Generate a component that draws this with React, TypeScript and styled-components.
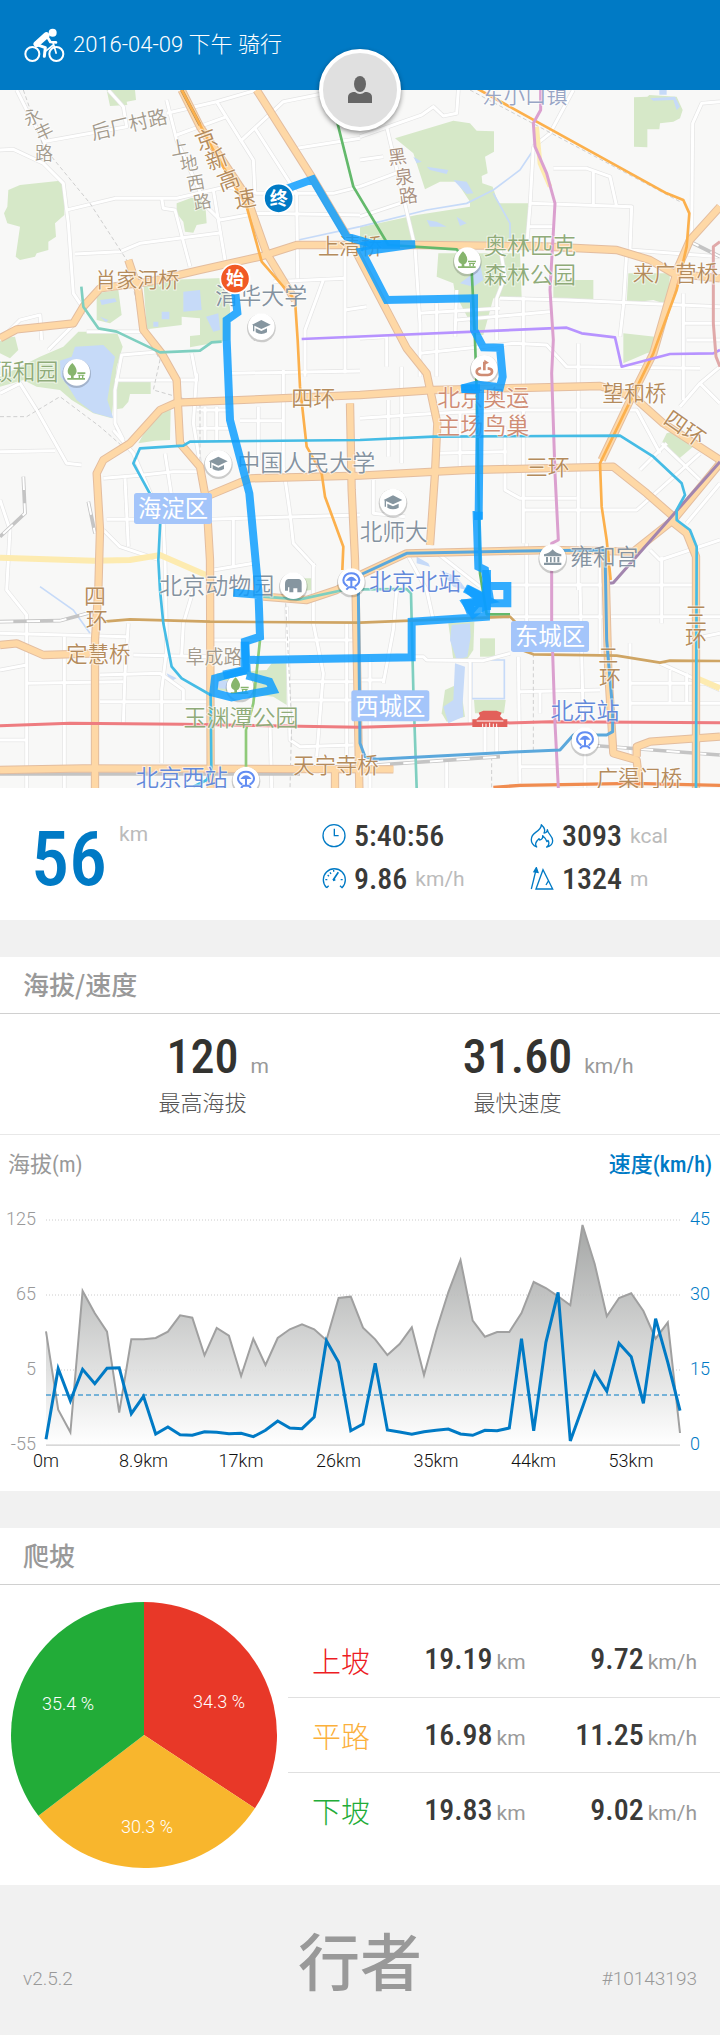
import React from 'react';
import styled, { createGlobalStyle } from 'styled-components';

const blue = '#007ac5';
const sans = 'Roboto, "Noto Sans CJK SC", sans-serif';
const cjk = '"Noto Sans CJK SC", sans-serif';
const condensed = '"Roboto Condensed", Roboto, "Noto Sans CJK SC", sans-serif';

const GlobalStyle = createGlobalStyle`
  * { box-sizing: border-box; }
  body { margin: 0; background: #f1f1f1; color: #333; font-family: ${sans}; }
  h1, h2, p { margin: 0; font-weight: 400; }
  svg { display: block; }
`;

const Page = styled.main`
  display: flex;
  flex-direction: column;
`;

const Header = styled.header`
  position: relative;
  display: flex;
  align-items: center;
  gap: 8px;
  height: 90px;
  padding: 0 24px;
  background: ${blue};
  color: #fff;
`;

const Title = styled.h1`
  font-size: 22px;
  line-height: 32px;
  font-family: Roboto, "Noto Sans CJK SC", sans-serif;
  font-weight: 300;
`;

const Avatar = styled.div`
  position: absolute;
  left: 50%;
  bottom: 0;
  transform: translate(-50%, 50%);
  z-index: 1;
  display: flex;
  align-items: center;
  justify-content: center;
  width: 82px;
  height: 82px;
  border: 4px solid #fff;
  border-radius: 50%;
  background: #e0e0e0;
  box-shadow: 0 2px 5px rgba(0, 0, 0, 0.45);
`;

const MapView = styled.svg`
  width: 100%;
  height: auto;
  background: #f8f8f7;
`;

const Summary = styled.section`
  display: grid;
  grid-template-columns: 322fr 208fr 190fr;
  align-items: center;
  padding: 26px 0 20px;
  background: #fff;
`;

const Distance = styled.p`
  display: flex;
  align-items: flex-start;
  gap: 12px;
  padding: 4px 0 0 31px;
  color: ${blue};
  font: 500 76px/82px ${condensed};
`;

const Unit = styled.span<{ $tone?: string }>`
  color: ${p => p.$tone || '#bbb'};
  font: 400 21px/32px ${sans};
`;

const StatColumn = styled.div`
  display: flex;
  flex-direction: column;
`;

const Stat = styled.p`
  display: flex;
  align-items: center;
  gap: 8px;
  height: 43px;
  white-space: nowrap;
`;

const Figure = styled.span`
  color: #3a3a38;
  font: 500 30px/36px ${condensed};
`;

const Card = styled.section`
  margin-top: 37px;
  background: #fff;
`;

const CardTitle = styled.h2`
  height: 57px;
  padding: 0 23px;
  border-bottom: 1px solid #d0d0d0;
  color: #999;
  font: 500 26px/54px ${cjk};
`;

const Peaks = styled.div`
  display: grid;
  grid-template-columns: 1fr 1fr;
  padding: 16px 45px;
  border-bottom: 1px solid #e8e8e8;
`;

const Peak = styled.div`
  display: flex;
  flex-direction: column;
`;

const PeakValue = styled.p`
  display: grid;
  grid-template-columns: 1fr auto 1fr;
  column-gap: 12px;
  align-items: baseline;
  color: #333330;
  font: 500 48px/54px ${condensed};

  &::before { content: ""; }
`;

const PeakLabel = styled.p`
  color: #555;
  text-align: center;
  font: 300 22px/34px ${cjk};
`;

const AxisTitles = styled.div`
  display: flex;
  justify-content: space-between;
  padding: 4px 8px 0;
  font: 22px/52px ${condensed};
`;

const AxisTitle = styled.span<{ $strong?: boolean }>`
  color: ${p => (p.$strong ? blue : '#999')};
  font-weight: ${p => (p.$strong ? 500 : 400)};
`;

const Chart = styled.svg`
  width: 100%;
  height: auto;
  font: 300 18px ${sans};
`;

const Climb = styled.div`
  display: grid;
  grid-template-columns: 2fr 3fr;
  align-items: center;
  padding: 17px 0;
`;

const Pie = styled.svg`
  width: 100%;
  height: auto;
  font: 300 18px ${sans};
`;

const ClimbTable = styled.table`
  width: 100%;
  border-collapse: collapse;
  table-layout: fixed;
  white-space: nowrap;
`;

const ClimbRow = styled.tr`
  height: 75px;
  & + & { border-top: 1px solid #e0e0e0; }
`;

const Kind = styled.th<{ $tone: string }>`
  width: 24%;
  padding: 0 0 0 24px;
  color: ${p => p.$tone};
  text-align: left;
  font: 300 29px/40px ${cjk};
`;

const Amount = styled.td<{ $last?: boolean }>`
  width: ${p => (p.$last ? '45%' : '31%')};
  padding: 0 ${p => (p.$last ? '23px' : '0')} 0 0;
  text-align: right;

  ${Unit} { margin-left: 4px; }
`;

const Footer = styled.footer`
  display: grid;
  grid-template-columns: 1fr auto 1fr;
  align-items: end;
  padding: 29px 23px 31px;
  color: #999;
  font: 300 19px/26px ${sans};
`;

const FooterNote = styled.span<{ $end?: boolean }>`
  padding-bottom: 12px;
  text-align: ${p => (p.$end ? 'right' : 'left')};
`;

const Brand = styled.strong`
  color: #999;
  font: 500 62px/90px ${cjk};
`;

/* ---------- icons ---------- */

const BikeIcon = () => (
  <svg width="41" height="36" viewBox="0 0 123 108" fill="none" stroke="#fff" aria-hidden="true">
    <circle cx="25" cy="81" r="21" strokeWidth="6" />
    <circle cx="97" cy="81" r="21" strokeWidth="6" />
    <circle cx="86" cy="17" r="12" fill="#fff" stroke="none" />
    <path d="M67 25 38 51" strokeWidth="19" strokeLinecap="round" />
    <path d="M36 52 64 62 61 88" strokeWidth="9" strokeLinejoin="round" strokeLinecap="round" />
    <path d="M68 26 79 45 96 46" strokeWidth="8" strokeLinejoin="round" strokeLinecap="round" />
    <path d="M86 43 97 80M64 73 88 54" strokeWidth="5" />
  </svg>
);

const UserIcon = () => (
  <svg width="24" height="28" viewBox="0 0 24 28" fill="#666" aria-hidden="true">
    <ellipse cx="12" cy="8" rx="6" ry="8" />
    <path d="M0 27V21q0-4 5-5h2q5 4 10 0h2q5 1 5 5v6z" />
  </svg>
);

const LineIcon = ({ children }: { children: React.ReactNode }) => (
  <svg width="24" height="24" viewBox="0 0 72 72" fill="none" stroke={blue} strokeWidth="4" aria-hidden="true">
    {children}
  </svg>
);

const ClockIcon = () => (
  <LineIcon><circle cx="36" cy="35" r="33" /><path d="M37 14V35H50" /></LineIcon>
);

const GaugeIcon = () => (
  <LineIcon>
    <path d="M14 62A33 33 0 1 1 60 62L54 56M14 62 20 56" />
    <path d="M33 40 49 16M33 40 40 38" strokeWidth="5" />
    <path d="M10 38h6M56 38h6M24 16l3 5M35 9v5M17 24l4 4" />
  </LineIcon>
);

const FireIcon = () => (
  <LineIcon>
    <path d="M20 69C-3 58 1 36 17 25C29 17 34 10 34 2C43 10 46 20 42 27C51 26 52 20 52 17C53 30 68 35 68 50Q68 65 50 69Q61 60 54 49L51 53Q47 42 38 35Q39 47 29 48L27 44Q11 58 20 69Z" strokeLinejoin="round" />
  </LineIcon>
);

const ClimbIcon = () => (
  <LineIcon>
    <path d="M4 66 17 13" /><path d="M12 14 19 2 24 16Z" fill={blue} />
    <path d="M18 66 39 8 68 66ZM48 54 55 42" />
  </LineIcon>
);

/* ---------- map ---------- */

const parks = [
  'M25 300 60 285 180 272 193 290 193 375 165 400 168 440 145 455 145 480 110 490 105 500 60 510 47 500 60 410 22 400 12 370 22 350Z',
  'M320 0H405L408 30 380 35 382 45 330 48Z',
  'M575 323 615 330 620 400 590 405 580 428 555 425 550 395 530 370 530 340Z',
  'M430 572 690 563 690 750 570 772 570 738 600 735 600 685 545 680 545 705 440 718Z',
  'M290 610 355 600 365 675 330 700 290 690Z',
  'M235 725H350L368 770 350 830 335 985 280 970 215 930 180 900 110 890 70 870 0 890V860L120 800 190 770Z',
  'M0 745 45 740 55 780 30 805 0 790Z',
  'M350 873 452 875V912H390L385 935 368 955 348 958Z',
  'M465 970 512 960 510 1050 465 1052 415 1060Z',
  'M1185 145 1360 92 1410 100 1430 122 1482 124V185L1455 200 1463 250 1445 258 1447 280 1478 290 1495 340H1585V455H1080V412L1250 375 1410 350V335L1370 275 1320 275 1275 298 1240 190Z',
  'M1315 490H1560L1565 622 1480 625 1450 735H1430L1365 610 1360 580 1310 560Z',
  'M1660 570H1780V630L1660 625Z',
  'M1885 550H2010L2005 645 1960 630 1880 640Z',
  'M1902 22 1942 20 1948 15 2030 20 2048 60 2040 85 2020 95 1980 100 1978 118H1942V172L1902 170Z',
  'M1870 730 1965 740 1960 785 1940 790 1870 820Z',
  'M2000 1030 2035 1020 2085 1065 2035 1108 1985 1060Z',
  'M850 1465H935V1500L850 1510Z',
  'M650 1750 800 1740 815 1720H860V1845L820 1820 650 1800Z',
  'M1345 1600 1423 1595 1420 1680 1400 1710H1360Z',
  'M1440 1645H1485V1700H1440Z',
  'M1335 1800 1380 1780 1395 1880 1340 1895 1325 1870Z',
  'M1422 1830H1517L1512 1870H1425Z',
];

const lakes = [
  'M225 770 310 765 345 800 335 850 322 930 340 985 280 968 230 930 205 890 182 860 180 812 215 800Z',
  'M550 605 600 600 605 660 550 665ZM485 665H508V688H485ZM460 695H475V710H460ZM618 680 655 670 660 720 640 725Z',
  'M300 630 345 625 350 635 305 645ZM300 680 325 690 318 697Z',
  'M1240 200 1265 215 1250 220ZM1280 230 1345 240 1340 252 1290 240ZM1360 270 1400 275 1420 310 1400 312ZM1280 390 1310 395 1340 410 1290 410ZM1370 380 1400 400 1380 408Z',
  'M1390 510 1440 520 1450 570 1420 590 1380 580 1420 550Z',
  'M1950 25 2025 20 2040 50 2030 60 2020 30 1960 32ZM1978 0H2000V14H1978Z',
  'M1355 1605 1410 1600 1412 1640 1402 1700 1370 1710 1350 1650Z',
  'M1365 1720 1395 1730 1388 1840 1390 1880 1345 1900 1330 1850 1360 1830Z',
  'M1250 1400 1285 1420 1290 1430 1250 1420ZM1320 1440 1370 1460 1400 1500 1360 1490Z',
  'M650 1770 720 1775 720 1800 655 1795ZM500 1750 530 1765 510 1775Z',
];

const streets = [
  'M50 0 80 60 130 150 150 200', 'M130 155 380 110 370 50 325 0', 'M0 180 40 178 130 220 190 280 205 400 220 610 260 670',
  'M200 360 345 325 530 325 680 290 770 310 1000 310 1080 290', 'M225 492 360 485 420 460 665 428', 'M485 325 490 355 525 360 570 530',
  'M500 30 530 150 620 350 660 390 770 370 1080 375', 'M500 70 650 35 770 0', 'M530 135 680 80', 'M650 35 760 210 765 310',
  'M720 155 850 35 1000 5', 'M765 115 890 310 893 565', 'M640 300 675 510', 'M890 175 1080 145', 'M0 750 60 690 120 675 125 750',
  'M145 780 230 695', 'M820 575 1035 565', 'M1035 480 1035 850', 'M970 570 915 720 915 860', 'M1035 660 1100 650', 'M260 725 450 725',
  'M345 870 590 870 575 790', 'M370 1050 345 1000 345 900 365 795 480 785', 'M690 850 1080 843', 'M590 850 580 1000 600 1120',
  'M850 840 850 1130 870 1270 880 1360 945 1430', 'M720 992 850 992', 'M775 950 775 1110',
  'M590 960 690 960M590 1015 690 1015M615 950 615 1050M650 950 650 1050', 'M0 910 60 880 110 960 200 1120 245 1125', 'M0 1085 165 1082',
  'M340 1020 400 1090 490 1300 495 1410 500 1680', 'M310 1165 430 1155 520 1145 600 1145', 'M375 1165 385 1370', 'M320 1288 620 1288 1080 1275',
  'M495 1090 515 1220', 'M310 1320 360 1370 480 1410', 'M0 1230 30 1320 20 1500 80 1575 80 2094', 'M700 1290 700 1430', 'M640 1440 760 1420',
  'M0 1630 380 1640', 'M193 1640 193 2094', 'M385 1600 375 1750 370 1900', 'M300 1755 480 1750 550 1800 550 1840', 'M80 1780 370 1775',
  'M0 1740 80 1725', 'M300 1835 640 1835', 'M0 1950 80 1950', 'M500 1680 485 1800 485 2020', 'M400 1695 640 1700', 'M580 1500 550 1600 545 1695',
  'M640 1650 1080 1650', 'M940 1420 940 1600 970 1750 950 2000', 'M870 1775 1080 1775M870 1830 1080 1830', 'M860 1550 870 1950 900 1970 1060 1965',
  'M1040 1600 1040 2000', 'M810 1900 815 2094', 'M1160 110 1245 470 1260 700 1260 860', 'M1080 140 1265 75 1300 50 1330 78 1370 70 1375 0',
  'M1080 290 1200 245', 'M1080 380 1200 340', 'M1080 210 1150 200', 'M1600 170 1590 350 1580 470', 'M1720 0 1650 130 1600 170',
  'M1660 235 1760 235 1830 260 1850 350', 'M1780 245 1780 345', 'M1590 340 1895 350 1890 480 2160 500', 'M2160 35 2105 40 2078 100 2075 450',
  'M1585 410 1660 410', 'M1500 625 1700 630 2160 650', 'M1880 490 1870 650 1860 740', 'M1310 640 1310 860', 'M1370 600 1365 740',
  'M1255 670 1500 655', 'M1370 690 1650 665', 'M1570 620 1570 1360', 'M1500 470 1515 560 1490 625 1490 750', 'M1080 745 1160 740V830',
  'M1260 790 1540 760 1640 765 1700 830 2100 835', 'M1735 760 1735 1500', 'M1080 985 1310 970 1530 960 1910 960 1980 1090',
  'M1165 930 1165 1100M1205 830 1205 1120', 'M1300 1090 1520 1085M1380 970V1130', 'M1515 1010 1515 1200 1560 1225 1730 1225',
  'M1570 1260 1910 1260 2100 1090', 'M1120 1170 1120 1270 1215 1280', 'M2050 610V930', 'M1920 1140 2000 1060M1985 1060 2100 1170',
  'M2050 650V700H2160M2060 750H2160', 'M2040 950 2100 880 2160 940M2100 880 2160 830', 'M2160 1180 2060 1300M1950 1380 1980 1410 2160 1350',
  'M1220 1390 1280 1500 1300 1590', 'M1300 1380 1440 1490', 'M1580 1360 1580 1600', 'M1530 1485 2080 1485', 'M1740 1480 1750 1900',
  'M1500 1580 2160 1580', 'M1800 1380 1800 1700', 'M1985 1400 1985 1600', 'M1530 1690 1450 1712 1280 1710 1270 1700 1240 1700',
  'M1410 1710 1410 1900', 'M1555 1700 1560 2080', 'M1560 1805 1800 1800', 'M1620 1800 1620 1870', 'M1890 1660 1890 2000M1890 1780 2160 1780M1890 1840 2160 1840',
  'M1980 1720 2160 1800M2010 1740V1840M2060 1750V1840', 'M1455 1910 1455 1985M1490 1910 1490 1985', 'M1340 2010 1340 2094',
  'M1080 1770 1150 1770M1110 1700 1110 2094', 'M1755 1990 1755 2094', 'M1560 2030 1900 2030', 'M1190 1500 1180 1620 1150 1780', 'M2160 1630 2110 1640',
];

const highways = [
  'M545 0 600 110 740 320 800 490 885 630', 'M770 0 935 260 1060 470 1220 775 1280 850 1312 1000 1305 1150 1290 1365',
  'M0 745 50 718 220 700 250 650 300 595 450 575 600 540 780 500 890 465 1250 465 1600 468 1850 480 1950 510 2020 550 2160 565',
  'M385 510 415 600 430 720 485 790 530 870 540 1060 600 1130 620 1240 630 1410 632 2094',
  'M2160 350 2070 450 2035 530 1960 790 1905 900 1805 1110',
  'M285 2094 285 1650 295 1500 300 1320 290 1150 310 1110 390 1060 480 960 530 938 1080 915 1300 900 1800 888 1900 920 1990 1000 2160 1110',
  'M630 1215 750 1165 1080 1157 1400 1140 1840 1130 1940 1210 2020 1280', 'M1050 940 1055 1200 1065 1410 1078 2094',
  'M1080 1455 1220 1390 1650 1380 1900 1385 2020 1290 2160 1120', 'M1815 1380 1825 1750 1840 1990 1910 2010 1920 2094',
  'M2010 1290 2060 1330 2088 1400 2088 2094', 'M1910 2000 1910 1970 1950 1955 2160 1940', 'M0 2040 250 2035 1180 2038',
  'M0 1665 50 1660 130 1695 290 1690', 'M790 1520 920 1530 1010 1500 1080 1460', 'M1005 2040V2094',
];

const metro: [string, string, number?][] = [
  ['#63b96b', 'M1010 90 1060 290 1165 465 1370 478 1415 540 1425 750 1430 900 1440 1450 1460 1573 1530 1573'],
  ['#8fca79', 'M780 1650 760 1840 738 1920 738 2040'],
  ['#fcb04c', 'M545 0 640 180 740 350 785 515 885 630 893 750 900 890 920 1070 965 1150 975 1220 1030 1370 1027 1440'],
  ['#fcb04c', 'M1430 -5 1610 95 2000 310 2050 330 2068 370 2060 470 2030 600 1960 790 1800 1120 1805 1250 1820 1350 1832 1470'],
  ['#b793ff', 'M905 747 1700 713 1745 730 1845 742 1865 830 2010 792 2140 790 2160 780'],
  ['#7fcfc0', 'M244 590 250 650 295 715 350 725 480 787 600 782 635 757 665 755'],
  ['#7fcfc0', 'M790 1520 900 1528 1030 1500M1080 1498 1220 1497 1233 1510 1240 1800 1250 2094'],
  ['#cfa564', 'M310 1595 390 1588 630 1595 1080 1598 1530 1580 1550 1600 1565 1680 1600 1693 1850 1697 1980 1718 2010 1712 2160 1713'],
  ['#ee7c80', 'M0 1907 210 1900 550 1903 1080 1912 1650 1895 2160 1898', 9],
  ['#a285ae', 'M2160 1115 1840 1478 1830 1480', 9],
  ['#dba0cf', 'M1622 0 1622 60 1600 100 1605 170 1640 250 1665 340 1650 600 1660 750 1655 850 1665 1150 1675 1350 1655 1360 1655 1600 1665 1900 1675 2094', 9],
  ['#e0a9a9', 'M2160 455 2140 470 2140 700 2148 800 2160 830', 9],
  ['#45bce5', 'M580 2090 620 2070 634 2040 632 1815 545 1765 515 1730 490 1600 480 1500 475 1410 482 1270 400 1120 420 1075 550 1067 570 1055 1080 1050 1300 1040 1860 1037 1960 1100 2045 1180 2055 1215 2030 1260 2030 1290 2070 1320 2090 1370 2088 2094'],
  ['#5ba8dc', 'M1080 1455 1220 1390 1620 1382 1815 1380 1820 1650 1838 1860 1838 1925 1820 1935 1720 1935 1680 1980 1500 1988 1130 2008 1095 2000 1080 1960 1075 1500', 9],
];

const road = '#b48b5c';
const lane = '#a39a8c';
const place = '#8492a0';
const park = '#8fab79';
const station = '#6389da';
const arena = '#cf8c74';

const labels: [string, number, number, number, string, number?][] = [
  ['永', 98, 80, 54, lane, -25], ['丰', 132, 124, 54, lane, -25], ['路', 132, 190, 54, lane],
  ['后厂村路', 387, 103, 58, lane, -13],
  ['上', 538, 172, 54, lane, -10], ['地', 567, 220, 54, lane, -10], ['西', 587, 278, 54, lane, -10], ['路', 607, 335, 54, lane, -10],
  ['京', 618, 148, 66, road, -20], ['新', 650, 208, 66, road, -20], ['高', 685, 270, 66, road, -20], ['速', 735, 325, 66, road, -10],
  ['黑', 1192, 200, 56, '#a89080', -8], ['泉', 1212, 260, 56, '#a89080', -8], ['路', 1225, 317, 56, '#a89080', -8],
  ['肖家河桥', 412, 568, 63, road], ['清华大学', 784, 615, 69, place], ['上清桥', 1050, 467, 64, road],
  ['东小口镇', 1575, 16, 64, '#98a5c5'], ['奥林匹克', 1590, 467, 69, park], ['森林公园', 1590, 552, 69, park],
  ['来广营桥', 2026, 550, 64, road], ['颐和园', 72, 845, 69, park], ['四环', 940, 923, 66, road],
  ['中国人民大学', 919, 1118, 69, place], ['北京奥运', 1450, 921, 69, arena], ['主场鸟巢', 1450, 1005, 69, arena],
  ['望和桥', 1903, 908, 64, road], ['四环', 2055, 1015, 66, road, 35], ['三环', 1643, 1132, 66, road],
  ['北师大', 1181, 1325, 68, place], ['雍和宫', 1813, 1400, 68, place], ['北京动物园', 650, 1485, 69, place],
  ['北京北站', 1245, 1475, 69, station], ['四', 285, 1518, 66, road], ['环', 290, 1590, 66, road],
  ['定慧桥', 295, 1692, 64, road], ['阜成路', 642, 1702, 57, lane], ['玉渊潭公园', 723, 1882, 69, park],
  ['三', 2088, 1575, 66, road], ['环', 2088, 1645, 66, road], ['二', 1825, 1698, 60, road], ['环', 1830, 1765, 66, road],
  ['北京站', 1755, 1860, 69, station], ['天宁寺桥', 1008, 2026, 64, road], ['广渠门桥', 1918, 2064, 64, road],
  ['北京西站', 545, 2063, 69, station],
];

const districts: [string, number, number][] = [['海淀区', 402, 1209], ['西城区', 1054, 1801], ['东城区', 1533, 1593]];

const route =
  'M705 600 712 668 680 690 680 750 690 990 748 1210 775 1500 780 1640 735 1655 740 1740 670 1758 645 1765 640 1808 695 1822 820 1800 808 1775 740 1756M700 1508 785 1515M740 1710 1235 1702 1235 1595 1458 1580 1460 1488 1522 1488 1522 1540 1400 1540 1410 1565 1440 1530 1400 1495 1470 1530 1455 1440 1435 1430 1430 1275 1436 1275 1440 900 1385 896 1430 884 1500 892 1508 860 1500 773 1450 772 1422 720 1422 625 1160 630 1085 485 1245 463 1120 463 1040 440 938 268 850 300';

// Short stretches that were ridden more than once and show up darker.
const retraced = 'M1395 1495 1460 1530 1400 1540 1420 1570 1455 1545M1460 1440V1560M670 1755 740 1740M735 1655V1745M1080 470 1120 463H1200M1385 896H1440M1435 1265V1290';

const PoiGlyph = ({ kind }: { kind: string }) => {
  switch (kind) {
    case 'school':
      return <g fill="#8696a0"><path d="M-28 -6 0 -20 28 -6 0 7Z" /><path d="M-17 5 0 13 17 5V17Q0 27 -17 17Z" /><path d="M-25 -5H-21V14H-25Z" /></g>;
    case 'park':
      return <g fill="#87b56d"><path d="M-13 -28Q0 -15 0 -3-2 9-9 10V17H25V22H-28V17H-17V10Q-27 7-27 -4-25 -18-13 -28Z" /><path d="M2 0H26V5H2ZM5 7H23V10H20V17H16V10H10V17H6V10H5Z" /></g>;
    case 'arena':
      return <g fill="none" stroke="#cf8c74" strokeWidth="8"><path d="M-10 -1C-28 3-27 19-8 20H10C28 17 27 1 10 0M0 6V-20" /><path d="M0 -26 14 -17 0 -10Z" fill="#cf8c74" stroke="none" /></g>;
    case 'temple':
      return <g fill="#8696a0"><path d="M-26 -10Q-9 -13 0 -25 9 -13 26 -10V-4H-26ZM-20 -2H-14V14H-20ZM-8 -2H-3V14H-8ZM3 -2H8V14H3ZM14 -2H20V14H14ZM-26 15H26V22H-26Z" /></g>;
    case 'zoo':
      return <g fill="#8696a0"><path d="M-15 -20H15Q25 -20 25 -8V20H12V8H0V20H-12V5H-16V15H-25V-5Q-25 -18 -15 -20Z" /></g>;
    default:
      return <g fill="none" stroke="#628df2" strokeWidth="6"><path d="M-11 14C-36 -2-20 -25 0 -25S36 -2 11 14" /><path d="M-10 -6Q0 -17 10 -6ZM0 -5V17M-15 24 -8 17H8L15 24" /></g>;
  }
};

const pois: [string, number, number][] = [
  ['school', 784, 710], ['park', 230, 847], ['school', 655, 1120], ['school', 1179, 1236], ['park', 1402, 512],
  ['arena', 1453, 835], ['temple', 1658, 1403], ['zoo', 880, 1487], ['metro', 1054, 1475], ['metro', 1755, 1952],
  ['metro', 738, 2070], ['park', 720, 1790],
];

const Strokes = ({ paths, color, width }: { paths: string[]; color: string; width: number }) => (
  <g fill="none" stroke={color} strokeWidth={width} strokeLinejoin="round">
    {paths.map(d => <path key={d} d={d} />)}
  </g>
);

const RideMap = () => (
  <MapView viewBox="0 0 2160 2094" role="img" aria-label="骑行路线">
    <g fill="#d6e8c8">{parks.map(d => <path key={d} d={d} />)}</g>
    <g fill="#c6daf8">{lakes.map(d => <path key={d} d={d} />)}</g>
    <g fill="none" stroke="#c6daf8" strokeWidth="5">
      <path d="M1415 1710H1513V1826H1415Z" />
      <path d="M895 450 1080 410 1280 360 1400 340 1480 300 1560 240 1600 180M1480 310 1530 400 1530 470M120 1490 220 1560 270 1630" />
    </g>
    <Strokes paths={streets} color="#e4e4e4" width={13} />
    <Strokes paths={streets} color="#ffffff" width={9} />
    <g fill="none" stroke="#cfcfcf" strokeWidth="3" strokeDasharray="12 8">
      <path d="M70 0 130 170 270 340 380 510 430 720 480 810 460 900 600 940 600 1120 630 1400M0 980 80 980 180 920 300 1010 380 1080" />
      <path d="M855 1500 875 1900 870 2094M1600 1690 1600 1980M1475 2000V2094M1410 0 2040 335" />
    </g>
    <g fill="none" strokeWidth="11">
      <path stroke="#c4c4c4" d="M0 1595 180 1592 300 1560M70 1160 75 1270 0 1340M265 1235 285 1330M1130 2025 1500 2000M1760 1965 2160 1995M0 2052H900M2060 450 2160 500" />
      <path stroke="#fff" strokeWidth="6" strokeDasharray="40 40" d="M0 1595 180 1592 300 1560M70 1160 75 1270 0 1340M265 1235 285 1330M1130 2025 1500 2000M1760 1965 2160 1995M2060 450 2160 500" />
    </g>
    <path d="M0 1403 280 1412 390 1410 480 1395 630 1460M2090 1765 2160 1795" fill="none" stroke="#fdebb0" strokeWidth="18" />
    <path d="M1610 110 1620 220 1650 290" fill="none" stroke="#fdebb0" strokeWidth="14" />
    <Strokes paths={highways} color="#e3bd9f" width={25} />
    <Strokes paths={highways} color="#fed8a6" width={19} />
    <path d="M1480 2092 1560 2086 1900 2080 2160 2086" fill="none" stroke="#f08c50" strokeWidth="10" />
    <path d="M545 0 600 105" stroke="#a8875f" strokeWidth="10" />
    <g fill="none" strokeLinejoin="round">
      {metro.map(([color, d, width]) => <path key={d} d={d} stroke={color} strokeWidth={width || 8} />)}
    </g>
    <path d="M1417 1888H1430L1440 1878 1436 1868 1450 1862H1490L1505 1868 1500 1878 1510 1888H1522V1911H1417Z" fill="#e2605a" />
    <path d="M1448 1911V1901M1458 1911V1901M1469 1911V1898M1480 1911V1901M1490 1911V1901M1430 1893H1510" stroke="#fff" strokeWidth="3" />
    {pois.map(([kind, x, y]) => (
      <g key={`${x}-${y}`} transform={`translate(${x} ${y})`}>
        <circle cy="4" r="43" fill="#000" opacity="0.18" />
        <circle r="40" fill="#fff" />
        <PoiGlyph kind={kind} />
      </g>
    ))}
    <g fontFamily={cjk} textAnchor="middle">
      {labels.map(([text, x, y, size, color, turn]) => (
        <text
          key={`${text}${x}-${y}`} x={x} y={y} dy="0.37em" fontSize={size} fill={color} stroke="#fff" strokeWidth="6"
          strokeOpacity="0.6" paintOrder="stroke" fontWeight="350"
          transform={turn ? `rotate(${turn} ${x} ${y})` : undefined}
        >
          {text}
        </text>
      ))}
      {districts.map(([text, x, y]) => (
        <g key={text}>
          <rect x={x} y={y} width="234" height="93" rx="8" fill="#a4c5fa" />
          <text x={x + 117} y={y + 47} dy="0.37em" fontSize="70" fill="#fff">{text}</text>
        </g>
      ))}
    </g>
    <path d={route} fill="none" stroke="#0c9dff" strokeOpacity="0.84" strokeWidth="24" />
    <path d={retraced} fill="none" stroke="#0c9dff" strokeOpacity="0.8" strokeWidth="26" />
    <g fontFamily={cjk} fontWeight="700" fontSize="54" textAnchor="middle" fill="#fff" stroke="#fff">
      <circle cx="836" cy="325" r="44" fill={blue} strokeWidth="5" />
      <text x="836" y="325" dy="0.37em" stroke="none">终</text>
      <circle cx="705" cy="566" r="44" fill="#f15a24" strokeWidth="5" />
      <text x="705" y="566" dy="0.37em" stroke="none">始</text>
    </g>
  </MapView>
);

/* ---------- altitude / speed chart ---------- */

// Samples along the ride as heights over the base line, with 675 for the full scale.
const FULL = 675;
const altitude = [341, 106, 38, 462, 395, 340, 97, 317, 317, 321, 340, 389, 382, 269, 351, 328, 207, 319, 240, 321, 347, 362, 347, 314, 441, 445, 352, 317, 270, 303, 353, 210, 343, 458, 555, 373, 325, 339, 339, 396, 489, 471, 446, 419, 660, 543, 386, 441, 455, 402, 319, 368, 36];
const speed = [17, 229, 133, 227, 184, 230, 232, 94, 146, 33, 54, 31, 29, 40, 38, 34, 35, 25, 44, 72, 51, 49, 84, 313, 248, 43, 63, 245, 45, 39, 32, 40, 44, 48, 33, 29, 44, 43, 51, 319, 43, 308, 458, 12, 113, 218, 161, 305, 265, 125, 379, 248, 103];

const plot = { left: 46, right: 680, top: 29, bottom: 254 };
const toPoints = (samples: number[]) =>
  samples
    .map((v, i) => {
      const x = plot.left + ((plot.right - plot.left) * i) / (samples.length - 1);
      const y = plot.bottom - ((plot.bottom - plot.top) * v) / FULL;
      return `${x.toFixed(1)},${y.toFixed(1)}`;
    })
    .join(' ');

const gridRows: [number, string, string][] = [[29, '125', '45'], [104, '65', '30'], [179, '5', '15'], [254, '-55', '0']];
const distances = ['0m', '8.9km', '17km', '26km', '35km', '44km', '53km'];

const RideChart = () => (
  <Chart viewBox="0 0 720 300" role="img" aria-label="海拔与速度曲线">
    <defs>
      <linearGradient id="hill" gradientUnits="userSpaceOnUse" x1="0" x2="0" y1="34" y2="254">
        <stop offset="0" stopColor="#9b9d9c" />
        <stop offset="1" stopColor="#ffffff" />
      </linearGradient>
    </defs>
    {gridRows.map(([y, left, right]) => (
      <g key={left}>
        <line x1={plot.left} x2={plot.right} y1={y} y2={y} stroke="#ccc" strokeDasharray={y === plot.bottom ? undefined : '1 2'} />
        <text x="36" y={y + 5} textAnchor="end" fill="#999">{left}</text>
        <text x="690" y={y + 5} fill={blue}>{right}</text>
      </g>
    ))}
    <polygon points={`${plot.left},${plot.bottom} ${toPoints(altitude)} ${plot.right},${plot.bottom}`} fill="url(#hill)" fillOpacity="0.9" />
    <line x1={plot.left} x2={plot.right} y1={plot.bottom} y2={plot.bottom} stroke="#ccc" />
    <polyline points={toPoints(altitude)} fill="none" stroke="#a0a0a0" strokeWidth="2" />
    <line x1={plot.left} x2={plot.right} y1="204" y2="204" stroke={blue} strokeDasharray="5 3" />
    <polyline points={toPoints(speed)} fill="none" stroke={blue} strokeWidth="3" />
    {distances.map((text, i) => (
      <text key={text} x={46 + i * 97.5} y="276" textAnchor="middle" fill="#111">{text}</text>
    ))}
  </Chart>
);

/* ---------- pie ---------- */

const slices = [
  { share: 34.3, color: '#e83828', x: 219, y: 106 },
  { share: 30.3, color: '#f8b62d', x: 147, y: 231 },
  { share: 35.4, color: '#22ac38', x: 68, y: 108 },
];

const ClimbPie = () => {
  const [cx, cy, r] = [144, 133, 133];
  let start = 0;
  const point = (share: number) => {
    const angle = (share / 50) * Math.PI;
    return `${(cx + r * Math.sin(angle)).toFixed(2)} ${(cy - r * Math.cos(angle)).toFixed(2)}`;
  };
  return (
    <Pie viewBox="0 0 288 266" role="img" aria-label="爬坡比例">
      {slices.map(({ share, color, x, y }) => {
        const from = start;
        start += share;
        return (
          <g key={color}>
            <path d={`M${cx} ${cy}L${point(from)}A${r} ${r} 0 0 1 ${point(start)}Z`} fill={color} />
            <text x={x} y={y} textAnchor="middle" fill="#fff">{share} %</text>
          </g>
        );
      })}
    </Pie>
  );
};

const climbs = [
  { kind: '上坡', tone: '#ed1c24', km: '19.19', pace: '9.72' },
  { kind: '平路', tone: '#fbb03b', km: '16.98', pace: '11.25' },
  { kind: '下坡', tone: '#22ac38', km: '19.83', pace: '9.02' },
];

export default function App() {
  return (
    <Page>
      <GlobalStyle />
      <Header>
        <BikeIcon />
        <Title>2016-04-09 下午 骑行</Title>
        <Avatar><UserIcon /></Avatar>
      </Header>
      <RideMap />
      <Summary>
        <Distance>56<Unit>km</Unit></Distance>
        <StatColumn>
          <Stat><ClockIcon /><Figure>5:40:56</Figure></Stat>
          <Stat><GaugeIcon /><Figure>9.86</Figure><Unit>km/h</Unit></Stat>
        </StatColumn>
        <StatColumn>
          <Stat><FireIcon /><Figure>3093</Figure><Unit>kcal</Unit></Stat>
          <Stat><ClimbIcon /><Figure>1324</Figure><Unit>m</Unit></Stat>
        </StatColumn>
      </Summary>
      <Card>
        <CardTitle>海拔/速度</CardTitle>
        <Peaks>
          <Peak>
            <PeakValue>120<Unit $tone="#999">m</Unit></PeakValue>
            <PeakLabel>最高海拔</PeakLabel>
          </Peak>
          <Peak>
            <PeakValue>31.60<Unit $tone="#999">km/h</Unit></PeakValue>
            <PeakLabel>最快速度</PeakLabel>
          </Peak>
        </Peaks>
        <AxisTitles>
          <AxisTitle>海拔(m)</AxisTitle>
          <AxisTitle $strong>速度(km/h)</AxisTitle>
        </AxisTitles>
        <RideChart />
      </Card>
      <Card>
        <CardTitle>爬坡</CardTitle>
        <Climb>
          <ClimbPie />
          <ClimbTable>
            <tbody>
              {climbs.map(({ kind, tone, km, pace }) => (
                <ClimbRow key={kind}>
                  <Kind scope="row" $tone={tone}>{kind}</Kind>
                  <Amount><Figure>{km}</Figure><Unit $tone="#999">km</Unit></Amount>
                  <Amount $last><Figure>{pace}</Figure><Unit $tone="#999">km/h</Unit></Amount>
                </ClimbRow>
              ))}
            </tbody>
          </ClimbTable>
        </Climb>
      </Card>
      <Footer>
        <FooterNote>v2.5.2</FooterNote>
        <Brand>行者</Brand>
        <FooterNote $end>#10143193</FooterNote>
      </Footer>
    </Page>
  );
}
